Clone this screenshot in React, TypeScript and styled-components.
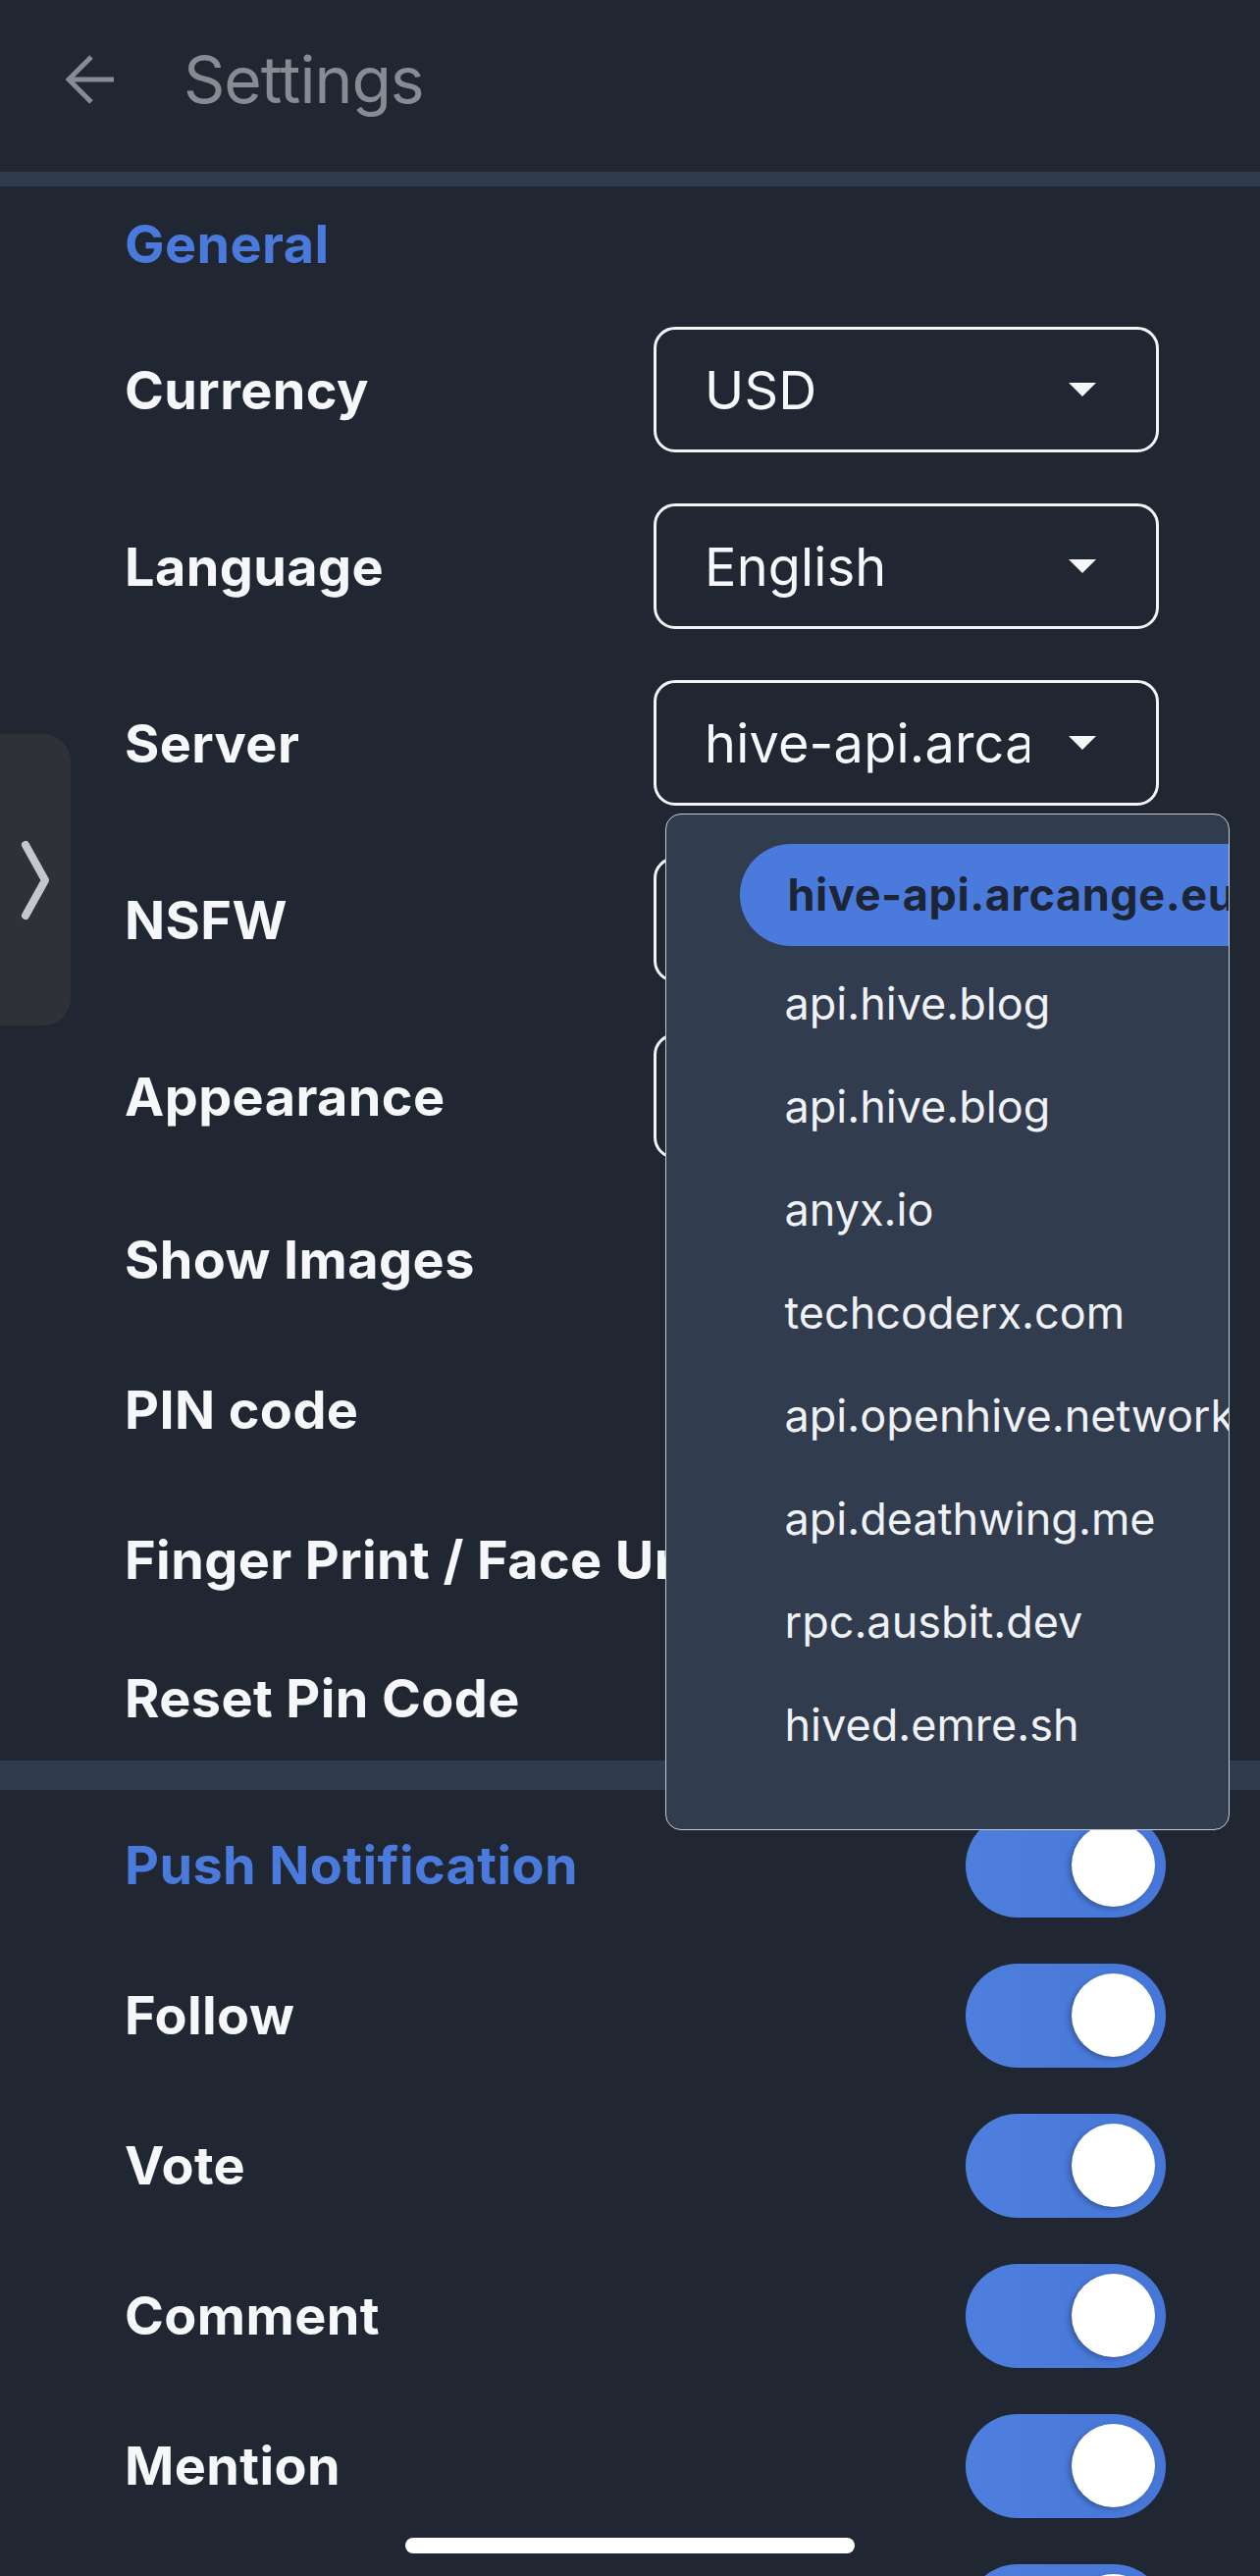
import React from 'react';
import styled, { createGlobalStyle } from 'styled-components';

/* -------------------------------------------------------------------------- */
/*                                    Data                                    */
/* -------------------------------------------------------------------------- */
const selects = [
  { label: 'Currency', value: 'USD' },
  { label: 'Language', value: 'English' },
  { label: 'Server', value: 'hive-api.arcange.eu' },
  { label: 'NSFW', value: 'Always hide' },
  { label: 'Appearance', value: 'Dark' },
];

const securityRows = ['Show Images', 'PIN code', 'Finger Print / Face Unlock'];

const notifications = ['Follow', 'Vote', 'Comment', 'Mention', 'Reblog'];

const servers = [
  'api.hive.blog',
  'api.hive.blog',
  'anyx.io',
  'techcoderx.com',
  'api.openhive.network',
  'api.deathwing.me',
  'rpc.ausbit.dev',
  'hived.emre.sh',
];

const Settings = () => {
  return (
    <Screen>
      <GlobalStyle />
      <Header>
        <BackButton aria-label="Back">
          <svg width="52" height="50" viewBox="0 0 52 50" fill="none">
            <path d="M50 25H4" stroke="#868c94" strokeWidth="5" />
            <path d="M27 2L4 25L27 48" stroke="#868c94" strokeWidth="5" />
          </svg>
        </BackButton>
        <Title>Settings</Title>
      </Header>

      <Divider $h={15} />

      <Section>
        <SectionTitle>General</SectionTitle>
        {selects.map((s) => (
          <Row key={s.label} $h={180}>
            <Label>{s.label}</Label>
            <SelectBox>
              <SelectValue>{s.value}</SelectValue>
              <Caret />
            </SelectBox>
          </Row>
        ))}
        {securityRows.map((label) => (
          <Row key={label} $h={153}>
            <Label>{label}</Label>
            <Toggle />
          </Row>
        ))}
        <Row $h={128}>
          <Label>Reset Pin Code</Label>
        </Row>
      </Section>

      <Divider $h={30} />

      <Section>
        <Row $h={153}>
          <Label $accent>Push Notification</Label>
          <Toggle />
        </Row>
        {notifications.map((label) => (
          <Row key={label} $h={153}>
            <Label>{label}</Label>
            <Toggle />
          </Row>
        ))}
      </Section>

      <DrawerHandle>
        <svg width="32" height="84" viewBox="0 0 32 84" fill="none">
          <path
            d="M6 6L26 42L6 78"
            stroke="#c4c7d0"
            strokeWidth="8"
            strokeLinecap="round"
            strokeLinejoin="round"
          />
        </svg>
      </DrawerHandle>

      <Menu>
        <SelectedItem>hive-api.arcange.eu</SelectedItem>
        {servers.map((s, i) => (
          <MenuItem key={i}>{s}</MenuItem>
        ))}
      </Menu>

      <HomeIndicator />
    </Screen>
  );
};

/* -------------------------------------------------------------------------- */
/*                                   Styles                                   */
/* -------------------------------------------------------------------------- */
const GlobalStyle = createGlobalStyle`
  html, body {
    margin: 0;
    padding: 0;
    background: #202733;
  }
  body {
    font-family: Inter, "Noto Sans", sans-serif;
  }
`;

const Screen = styled.div`
  position: relative;
  width: 1284px;
  height: 2625px;
  overflow: hidden;
  background: #202733;
`;

const Header = styled.header`
  display: flex;
  align-items: center;
  height: 175px;
  box-sizing: border-box;
  padding: 0 0 13px 66px;
`;

const BackButton = styled.div`
  display: flex;
  width: 52px;
`;

const Title = styled.h1`
  margin: 0 0 0 69px;
  font-size: 66px;
  font-weight: 400;
  letter-spacing: -1px;
  color: #868c94;
`;

const Divider = styled.div<{ $h: number }>`
  height: ${(p) => p.$h}px;
  background: #303b4d;
`;

const Section = styled.section`
  padding: 0 96px 0 127px;
`;

const SectionTitle = styled.h2`
  display: flex;
  align-items: center;
  height: 117px;
  margin: 0;
  font-size: 54px;
  font-weight: 700;
  letter-spacing: 0.4px;
  color: #4a7bdc;
`;

const Row = styled.div<{ $h: number }>`
  display: flex;
  align-items: center;
  justify-content: space-between;
  height: ${(p) => p.$h}px;
`;

const Label = styled.span<{ $accent?: boolean }>`
  font-size: 54px;
  font-weight: 700;
  letter-spacing: 0.4px;
  white-space: nowrap;
  color: ${(p) => (p.$accent ? '#4a7bdc' : '#f6f7f9')};
`;

const SelectBox = styled.div`
  display: flex;
  align-items: center;
  gap: 40px;
  width: 515px;
  height: 128px;
  box-sizing: border-box;
  margin-right: 7px;
  padding: 0 61px 0 49px;
  border: 3px solid #f2f3f5;
  border-radius: 22px;
`;

const SelectValue = styled.span`
  flex: 1;
  overflow: hidden;
  white-space: nowrap;
  font-size: 54px;
  font-weight: 400;
  letter-spacing: 0.2px;
  color: #f6f7f9;
`;

const Caret = styled.span`
  width: 0;
  height: 0;
  border-left: 14px solid transparent;
  border-right: 14px solid transparent;
  border-top: 14px solid #f6f7f9;
`;

const Toggle = styled.div`
  position: relative;
  width: 204px;
  height: 106px;
  border-radius: 53px;
  background: linear-gradient(90deg, #4e7fde, #4677d8);
  &:after {
    content: '';
    position: absolute;
    right: 11px;
    top: 10.5px;
    width: 85px;
    height: 85px;
    border-radius: 50%;
    background: #ffffff;
    box-shadow: -3px 2px 5px rgba(0, 0, 0, 0.25);
  }
`;

const DrawerHandle = styled.div`
  position: absolute;
  left: 0;
  top: 748px;
  display: flex;
  align-items: center;
  justify-content: center;
  width: 72px;
  height: 297px;
  border-radius: 0 28px 28px 0;
  background: #2e3237;
`;

const Menu = styled.div`
  position: absolute;
  left: 678px;
  top: 829px;
  width: 575px;
  height: 1036px;
  box-sizing: border-box;
  padding-top: 29.5px;
  overflow: hidden;
  border: 1.5px solid #c5c9d1;
  border-radius: 16px;
  background: #323c4f;
`;

const SelectedItem = styled.div`
  display: flex;
  align-items: center;
  height: 104px;
  margin: 0 -60px 6px 74.5px;
  padding-left: 49px;
  border-radius: 52px 0 0 52px;
  background: #4a7bdc;
  font-size: 45px;
  font-weight: 700;
  letter-spacing: 0.6px;
  white-space: nowrap;
  color: #1d2434;
`;

const MenuItem = styled.div`
  display: flex;
  align-items: center;
  height: 105px;
  padding-left: 120.5px;
  font-size: 45px;
  font-weight: 400;
  white-space: nowrap;
  color: #eff1f4;
`;

const HomeIndicator = styled.div`
  position: absolute;
  left: 413px;
  top: 2586px;
  width: 458px;
  height: 16px;
  border-radius: 8px;
  background: #ffffff;
`;

export default Settings;
